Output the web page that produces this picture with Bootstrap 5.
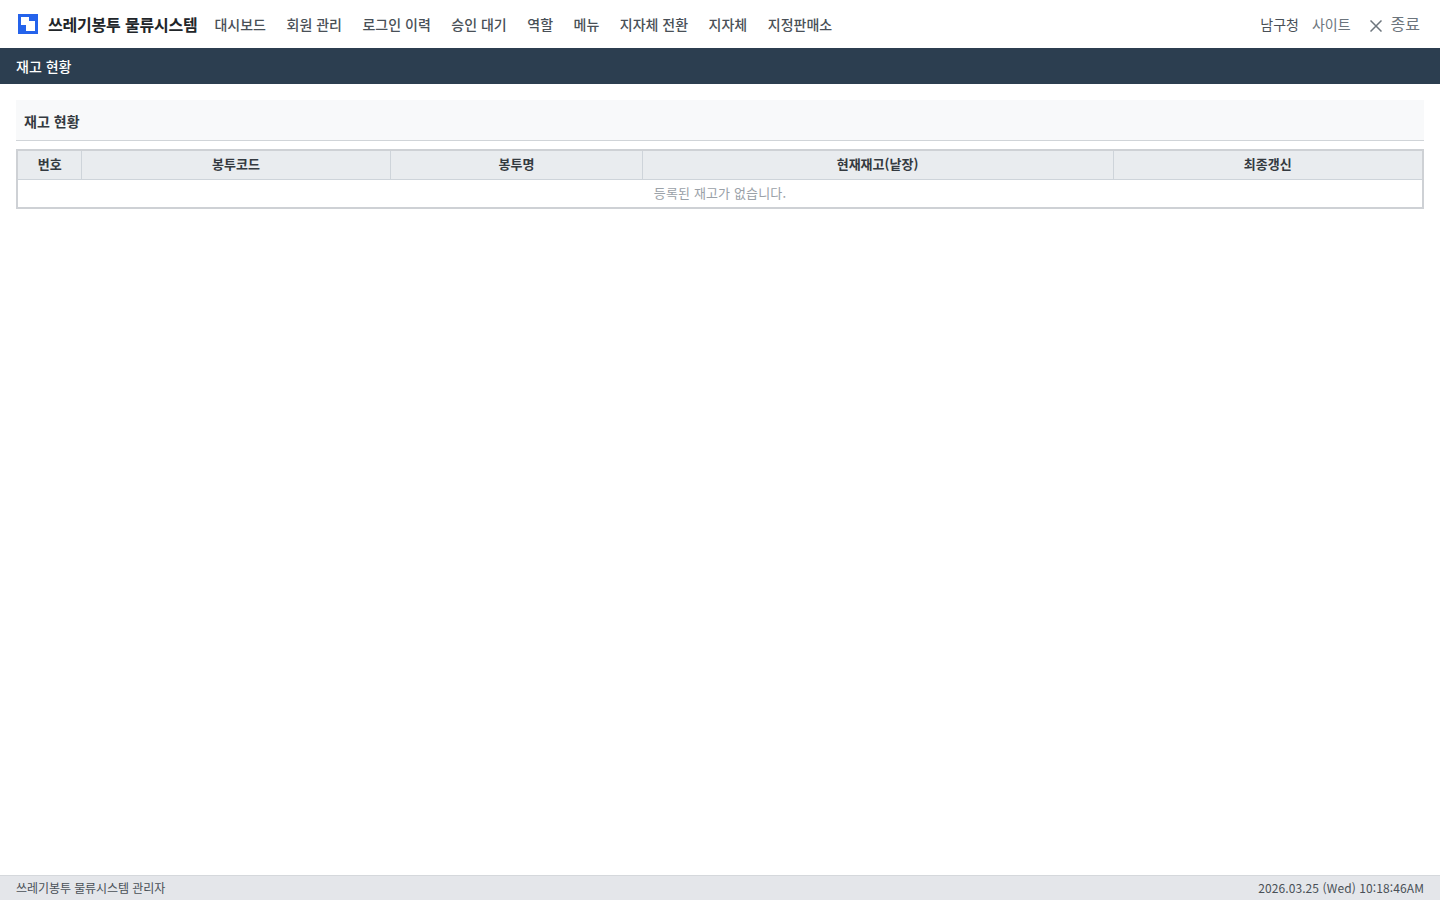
<!DOCTYPE html>
<html lang="ko">
<head>
<meta charset="utf-8">
<title>재고 현황</title>
<link href="https://cdn.jsdelivr.net/npm/bootstrap@5.3.0/dist/css/bootstrap.min.css" rel="stylesheet">
<style>
html,body{height:100%}
body{font-family:"Noto Sans CJK KR","Noto Sans",sans-serif;font-size:13px;color:#212529;background:#fff;overflow:hidden}
.shell{height:900px}
.topbar{height:48px;padding:0 20px 0 18px;background:#fff}
.brand-txt{font-size:16px;font-weight:700;letter-spacing:-.2px;color:#212529;margin-left:10px;margin-right:17px;text-decoration:none}
.menu-link{font-size:14px;font-weight:500;color:#495057;text-decoration:none;margin-right:20.5px;white-space:nowrap}
.side-link{font-size:14px;color:#6c757d;text-decoration:none}
.side-strong{color:#495057}
.side-site{margin-left:13px}
.side-exit{margin-left:19px}
.exit-txt{font-size:16px;line-height:1;padding-bottom:2px}
.exit-icon{margin:4px 9px 0 0}
.title-bar{height:36px;background:#2c3e50;color:#fff;font-size:14px;font-weight:500;padding:0 16px}
.panel-head{height:41px;background:#f8f9fa;border-bottom:1px solid #d0d4d8;font-size:14px;font-weight:700;letter-spacing:.05px;padding:2px 8px 0;color:#343a40}
.stock-wrap{border:2px solid #ced1d5;margin-top:8px}
.stock-table{width:100%;table-layout:fixed;border-collapse:collapse;font-size:13px}
.stock-table th{height:28px;background:#e9ecef;font-weight:700;text-align:center;padding:0 0 2px;border-left:1px solid #ced4da;border-bottom:1px solid #ced4da;color:#343a40}
.stock-table th:first-child{border-left:0}
.stock-table th:nth-child(-n+3){padding-left:1px}
.stock-table td{height:28px;padding:0 0 2px;text-align:center;color:#9aa1a8;background:#fff;letter-spacing:.15px}
.foot-bar{height:25px;background:#e4e6ea;border-top:1px solid #d5d8dc;font-size:12px;color:#495057;padding:0 16px 1px}
.foot-name{letter-spacing:-.07px}
.foot-date{letter-spacing:.1px}
</style>
</head>
<body>
<div class="shell d-flex flex-column">
  <nav class="topbar d-flex align-items-center">
    <svg width="20" height="20" viewBox="0 0 20 20"><rect width="20" height="20" fill="#2563eb"/><path d="M3 3h8v4h6v10H8v-6H3z" fill="#fff"/></svg>
    <a class="brand-txt" href="#">쓰레기봉투 물류시스템</a>
    <a class="menu-link" href="#">대시보드</a>
    <a class="menu-link" href="#">회원 관리</a>
    <a class="menu-link" href="#">로그인 이력</a>
    <a class="menu-link" href="#">승인 대기</a>
    <a class="menu-link" href="#">역할</a>
    <a class="menu-link" href="#">메뉴</a>
    <a class="menu-link" href="#">지자체 전환</a>
    <a class="menu-link" href="#">지자체</a>
    <a class="menu-link" href="#">지정판매소</a>
    <div class="ms-auto d-flex align-items-center">
      <a class="side-link side-strong" href="#">남구청</a>
      <a class="side-link side-site" href="#">사이트</a>
      <a class="side-link side-exit d-flex align-items-center" href="#">
        <svg class="exit-icon" width="12" height="12" viewBox="0 0 12 12"><path d="M.5.5l11 11M11.5.5l-11 11" stroke="#6c757d" stroke-width="1.5" fill="none"/></svg><span class="exit-txt">종료</span></a>
    </div>
  </nav>
  <div class="title-bar d-flex align-items-center">재고 현황</div>
  <main class="flex-grow-1 px-3" style="padding-top:16px">
    <div class="panel-head d-flex align-items-center">재고 현황</div>
    <div class="stock-wrap">
      <table class="stock-table">
        <colgroup><col style="width:63px"><col style="width:309px"><col style="width:252px"><col style="width:471px"><col></colgroup>
        <thead><tr><th>번호</th><th>봉투코드</th><th>봉투명</th><th>현재재고(낱장)</th><th>최종갱신</th></tr></thead>
        <tbody><tr><td colspan="5">등록된 재고가 없습니다.</td></tr></tbody>
      </table>
    </div>
  </main>
  <footer class="foot-bar d-flex align-items-center justify-content-between">
    <span class="foot-name">쓰레기봉투 물류시스템 관리자</span>
    <span class="foot-date">2026.03.25 (Wed) 10:18:46AM</span>
  </footer>
</div>
<script src="https://cdn.jsdelivr.net/npm/bootstrap@5.3.0/dist/js/bootstrap.bundle.min.js"></script>
</body>
</html>
